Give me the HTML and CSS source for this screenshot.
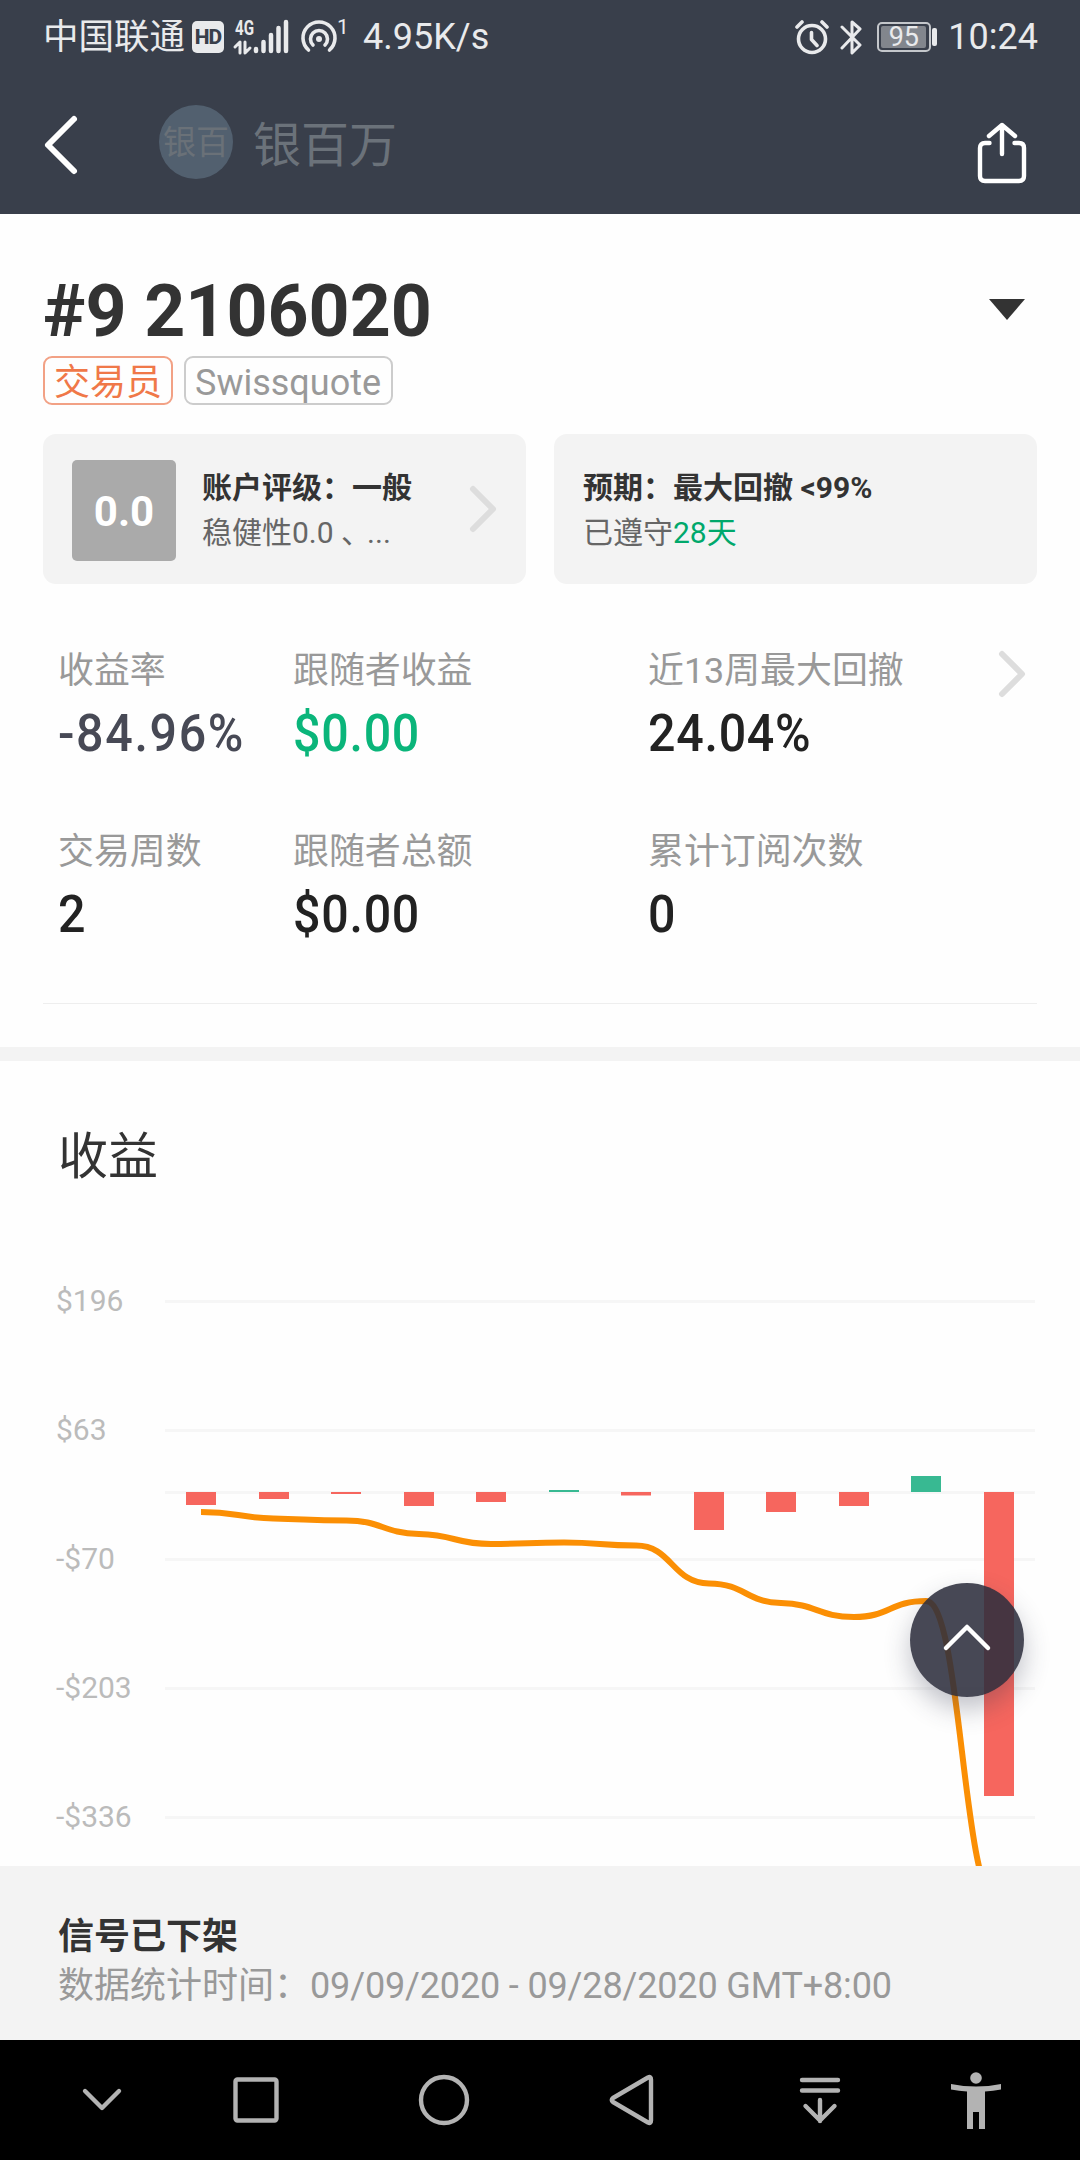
FILE: index.html
```html
<!DOCTYPE html>
<html lang="zh-CN">
<head>
  <meta charset="UTF-8">
  <title>银百万</title>
  <link rel="stylesheet" href="styles.css">
</head>
<body>

  <header class="top">
    <div class="status">
      <span class="carrier">中国联通</span>
      <span class="hd">HD</span>
      <svg class="signal" width="54" height="36" viewBox="0 0 54 36">
        <text x="0" y="16" class="net" textLength="19" lengthAdjust="spacingAndGlyphs">4G</text>
        <path d="M0 28l5-5v11M10 23v11l5-5" class="arrows"/>
        <path d="M21 30v2M28.500 23v9M36 16v16M43.500 9v23M51 3v29" class="sticks"/>
      </svg>
      <svg class="hotspot" width="38" height="34" viewBox="0 0 38 34">
        <path d="M8.500 30a16 16 0 1 1 21 0M13 25a8.500 8.500 0 1 1 12 0"/>
        <circle cx="19" cy="19" r="3"/>
      </svg>
      <sup class="hot-count">1</sup>
      <span class="speed">4.95K/s</span>
      <svg class="alarm" width="34" height="36" viewBox="0 0 34 36">
        <circle cx="17" cy="20" r="13.500"/>
        <path d="M16.500 13.500v7l5.500 6M2 8l5-5M32 8l-5-5"/>
      </svg>
      <svg class="bt" width="22" height="36" viewBox="0 0 22 36">
        <path d="M2 8l18 18-8 8V3l8 7L2 29"/>
      </svg>
      <div class="battery"><span>95</span></div>
      <span class="time">10:24</span>
    </div>

    <div class="navbar">
      <svg class="back" width="36" height="62" viewBox="0 0 36 62">
        <path d="M31 5L5 31l26 26"/>
      </svg>
      <div class="avatar">银百</div>
      <div class="nickname">银百万</div>
      <svg class="share" width="52" height="64" viewBox="0 0 52 64">
        <path d="M13.500 22H9q-5 0-5 5v28q0 5 5 5h34q5 0 5-5V27q0-5-5-5h-4.500M26 33V4M13 15L26 4l13 11"/>
      </svg>
    </div>
  </header>

  <section class="account">
    <div class="title-row">
      <h1>#9 2106020</h1>
      <span class="dropdown"></span>
    </div>
    <div class="tags">
      <span class="tag trader">交易员</span>
      <span class="tag broker">Swissquote</span>
    </div>

    <div class="cards">
      <div class="card">
        <div class="score">0.0</div>
        <div class="card-text">
          <strong>账户评级：一般</strong>
          <p>稳健性0.0<span class="comma"> 、</span>...</p>
        </div>
        <svg class="arrow" width="28" height="48" viewBox="0 0 28 48"><path d="M4 4l20 20L4 44"/></svg>
      </div>
      <div class="card">
        <div class="card-text">
          <strong>预期：最大回撤 &lt;99%</strong>
          <p>已遵守<span class="green">28天</span></p>
        </div>
      </div>
    </div>

    <div class="stats">
      <div class="stat"><label>收益率</label><b class="muted">-84.96%</b></div>
      <div class="stat"><label>跟随者收益</label><b class="profit">$0.00</b></div>
      <div class="stat"><label>近13周最大回撤</label><b>24.04%</b></div>
      <svg class="arrow" width="28" height="48" viewBox="0 0 28 48"><path d="M4 4l20 20L4 44"/></svg>
      <div class="stat"><label>交易周数</label><b>2</b></div>
      <div class="stat"><label>跟随者总额</label><b>$0.00</b></div>
      <div class="stat"><label>累计订阅次数</label><b>0</b></div>
    </div>
  </section>

  <section class="profit-chart">
    <h2>收益</h2>
    <svg class="chart" width="1080" height="626" viewBox="0 0 1080 626">
      <g class="grid">
        <path d="M165 61.500H1035M165 190.500H1035M165 252.500H1035M165 319.500H1035M165 448.500H1035M165 577.500H1035"/>
      </g>
      <g class="axis">
        <text x="56" y="71">$196</text>
        <text x="56" y="200">$63</text>
        <text x="56" y="329">-$70</text>
        <text x="56" y="458">-$203</text>
        <text x="56" y="587">-$336</text>
      </g>
      <g class="loss">
        <rect x="186" y="252" width="30" height="13"/>
        <rect x="259" y="252" width="30" height="7"/>
        <rect x="331" y="252" width="30" height="2"/>
        <rect x="404" y="252" width="30" height="14"/>
        <rect x="476" y="252" width="30" height="10"/>
        <rect x="621" y="252" width="30" height="3.500"/>
        <rect x="694" y="252" width="30" height="38"/>
        <rect x="766" y="252" width="30" height="20"/>
        <rect x="839" y="252" width="30" height="14"/>
        <rect x="984" y="252" width="30" height="304"/>
      </g>
      <g class="gain">
        <rect x="549" y="250" width="30" height="2"/>
        <rect x="911" y="236" width="30" height="16"/>
      </g>
      <path class="line" d="M201 272C237 272 237 277.500 273.500 278.500S310 280.500 346 280.500S382 293 419 294S455 304 491 304S528 302.500 564 302.500S600 305.500 636 305.500C672 305.500 672 343 709 343.500S745 362 781 363S818 377 854 377S890 361 926 361C962 361 962 665 999 665"/>
    </svg>
  </section>

  <button class="to-top">
    <svg width="54" height="32" viewBox="0 0 54 32"><path d="M6 26L27 5l21 21"/></svg>
  </button>

  <footer class="notice">
    <strong>信号已下架</strong>
    <p>数据统计时间：<span class="range">09/09/2020 - 09/28/2020 GMT+8:00</span></p>
  </footer>

  <nav class="sysnav">
    <svg width="60" height="60" viewBox="0 0 60 60"><path d="M13 21l17 17 17-17"/></svg>
    <svg width="60" height="60" viewBox="0 0 60 60"><rect x="9.500" y="9.500" width="41" height="41" rx="2"/></svg>
    <svg width="60" height="60" viewBox="0 0 60 60"><circle cx="30" cy="30" r="23"/></svg>
    <svg width="60" height="60" viewBox="0 0 60 60"><path d="M11 28L46 7.500q3-1.500 3 2v41q0 3.500-3 2L11 32q-2.500-2 0-4z"/></svg>
    <svg width="60" height="60" viewBox="0 0 60 60"><path d="M12 10h36M12 20.500h36M30 30v21M15.500 36L30 50.500 44.500 36"/></svg>
    <svg class="person" width="60" height="60" viewBox="0 0 60 60">
      <circle cx="30" cy="8" r="5.800"/>
      <path d="M5 14q25 5 50 0v5.500q-8 1.500-16 2V59h-6V42h-6v17h-6V21.500q-8-.5-16-2z"/>
    </svg>
  </nav>

</body>
</html>
```
FILE: styles.css
```css
* {
  box-sizing: border-box;
}
body {
  margin: 0;
  width: 1080px;
  height: 2160px;
  overflow: hidden;
  position: relative;
  display: flex;
  flex-direction: column;
  background: #fefefe;
  color: #333;
  font-family: Roboto, "Noto Sans CJK SC", sans-serif;
}
h1, h2, p {
  margin: 0;
}
svg {
  display: block;
  flex: none;
  fill: none;
  stroke-linecap: round;
  stroke-linejoin: round;
}

/* header */
.top {
  height: 214px;
  background: #393f4b;
}
.status {
  display: flex;
  align-items: center;
  height: 74px;
  padding: 0 42px 0 43px;
  color: #e9eaec;
  font-size: 36px;
  line-height: 76px;
  white-space: nowrap;
}
.carrier {
  font-size: 35.5px;
  width: 149px;
}
.hd {
  width: 32px;
  height: 32px;
  border-radius: 5px;
  background: #e9eaec;
  color: #393f4b;
  font-size: 21px;
  font-weight: 800;
  line-height: 33px;
  text-align: center;
  letter-spacing: -1px;
}
.signal {
  margin-left: 11px;
  overflow: visible;
}
.net {
  fill: #e9eaec;
  font-size: 20px;
  font-weight: 700;
}
.arrows {
  stroke: #e9eaec;
  stroke-width: 3;
}
.sticks {
  stroke: #e9eaec;
  stroke-width: 4.5;
}
.hotspot {
  margin-left: 11px;
  stroke: #e9eaec;
  stroke-width: 3.6;
}
.hotspot circle {
  fill: #e9eaec;
  stroke: none;
}
.hot-count {
  width: 12px;
  font-size: 21px;
  line-height: 20px;
  margin-bottom: 20px;
  margin-left: -1px;
}
.speed {
  margin-left: 14px;
}
.alarm {
  margin-left: auto;
  stroke: #e9eaec;
  stroke-width: 3.6;
}
.bt {
  margin-left: 11px;
  stroke: #e9eaec;
  stroke-width: 3;
}
.battery {
  position: relative;
  width: 54px;
  height: 30px;
  margin: 0 17px 0 15px;
  padding: 2px;
  border: 2px solid #c4c7cb;
  border-radius: 5px;
}
.battery span {
  display: block;
  width: 45px;
  height: 22px;
  border-radius: 2px;
  background: #82868d;
  font-size: 27px;
  line-height: 23px;
  text-align: center;
}
.battery::after {
  content: "";
  position: absolute;
  right: -8px;
  top: 4px;
  width: 5px;
  height: 18px;
  border-radius: 2px;
  background: #e9eaec;
}

.navbar {
  display: flex;
  align-items: center;
  height: 140px;
  padding: 0 52px 4px 43px;
}
.back {
  margin-top: 6px;
  stroke: #fff;
  stroke-width: 6;
}
.avatar {
  width: 74px;
  height: 74px;
  margin-left: 80px;
  border-radius: 50%;
  background: #52606f;
  color: #6a7178;
  font-size: 33px;
  line-height: 75px;
  text-align: center;
  white-space: nowrap;
}
.nickname {
  margin: 0 0 3px 20px;
  color: #6b727a;
  font-size: 48px;
}
.share {
  margin: 22px 0 0 auto;
  stroke: #fff;
  stroke-width: 4.4;
}

/* account */
.account {
  height: 847px;
  padding: 60px 43px 0;
  border-bottom: 14px solid #f3f3f3;
}
.title-row {
  display: flex;
  align-items: center;
  justify-content: space-between;
  height: 72px;
}
h1 {
  padding-top: 4px;
  font-size: 71.6px;
  line-height: 72px;
}
.dropdown {
  margin: 0 12px 1px 0;
  border: 18px solid transparent;
  border-top: 21px solid #333;
  border-bottom: 0;
}
.tags {
  display: flex;
  gap: 11px;
  margin-top: 10px;
}
.tag {
  height: 49px;
  padding: 0 9px;
  border: 2px solid #ccc;
  border-radius: 9px;
  color: #999;
  font-size: 36px;
  line-height: 50px;
  white-space: nowrap;
}
.trader {
  border-color: #f2a185;
  color: #f07848;
  width: 130px;
}
.broker {
  width: 209px;
}
.cards {
  display: flex;
  gap: 28px;
  margin-top: 29px;
}
.card {
  display: flex;
  align-items: center;
  flex: 1;
  height: 150px;
  padding: 2px 28px 0 29px;
  border-radius: 13px;
  background: #f3f3f3;
}
.score {
  width: 104px;
  height: 101px;
  margin-right: 26px;
  border-radius: 5px;
  background: #aaa;
  color: #fff;
  font-size: 42px;
  font-weight: 700;
  line-height: 104px;
  text-align: center;
}
.card-text {
  font-size: 30px;
  line-height: 45px;
  white-space: nowrap;
}
.card-text strong {
  display: block;
}
.card-text p {
  color: #666;
}
.card-text .comma {
  margin-right: -4px;
}
.card-text .green {
  color: #00a86b;
}
.arrow {
  stroke: #ddd;
  stroke-width: 6;
}
.card .arrow {
  margin: 0 1px 2px auto;
}
.stats {
  display: grid;
  grid-template-columns: 235px 355px 350px 28px;
  grid-template-rows: 181px 150px;
  height: 420px;
  padding: 61px 0 0 15px;
  border-bottom: 1px solid #eee;
}
.stat {
  white-space: nowrap;
}
.stat label {
  display: block;
  color: #999;
  font-size: 35.9px;
  line-height: 52px;
}
.stat b {
  display: block;
  width: max-content;
  margin-top: 7px;
  color: #222;
  font-size: 52px;
  font-weight: 500;
  line-height: 60px;
  letter-spacing: .8px;
  transform: scaleX(.93);
  transform-origin: left;
}
.stat .muted {
  color: #474955;
  letter-spacing: 1.8px;
}
.stat .profit {
  color: #0ab57a;
}
.stats .arrow {
  margin-top: 5px;
}

/* chart */
.profit-chart {
  height: 805px;
}
h2 {
  height: 179px;
  padding: 60px 0 0 58px;
  font-size: 50px;
  font-weight: 400;
  line-height: 72px;
}
.grid {
  stroke: #f6f6f6;
  stroke-width: 3;
  stroke-linecap: butt;
}
.axis {
  fill: #bbb;
  font-size: 30px;
}
.loss {
  fill: #f6665e;
}
.gain {
  fill: #38b992;
}
.line {
  stroke: #fb8f04;
  stroke-width: 6;
  stroke-linecap: butt;
}
.to-top {
  position: absolute;
  left: 910px;
  top: 1583px;
  display: flex;
  align-items: center;
  justify-content: center;
  width: 114px;
  height: 114px;
  padding: 0 0 4px;
  border: 0;
  border-radius: 50%;
  background: rgba(46, 47, 62, .88);
  box-shadow: 0 12px 26px rgba(50, 52, 75, .3);
}
.to-top svg {
  stroke: #fff;
  stroke-width: 4.5;
}

/* bottom */
.notice {
  height: 174px;
  padding: 47px 58px 0;
  background: #f3f3f3;
  font-size: 36px;
  line-height: 49px;
  white-space: nowrap;
}
.notice p {
  color: #999;
}
.notice .range {
  letter-spacing: -.15px;
}
.sysnav {
  display: flex;
  align-items: center;
  gap: 128px;
  height: 120px;
  padding-left: 72px;
  background: #000;
}
.sysnav svg {
  stroke: #b3b3b3;
  stroke-width: 4.4;
}
.sysnav svg:first-child {
  margin-right: -34px;
}
.sysnav .person {
  margin-left: -32px;
  fill: #b3b3b3;
  stroke: none;
}
```
